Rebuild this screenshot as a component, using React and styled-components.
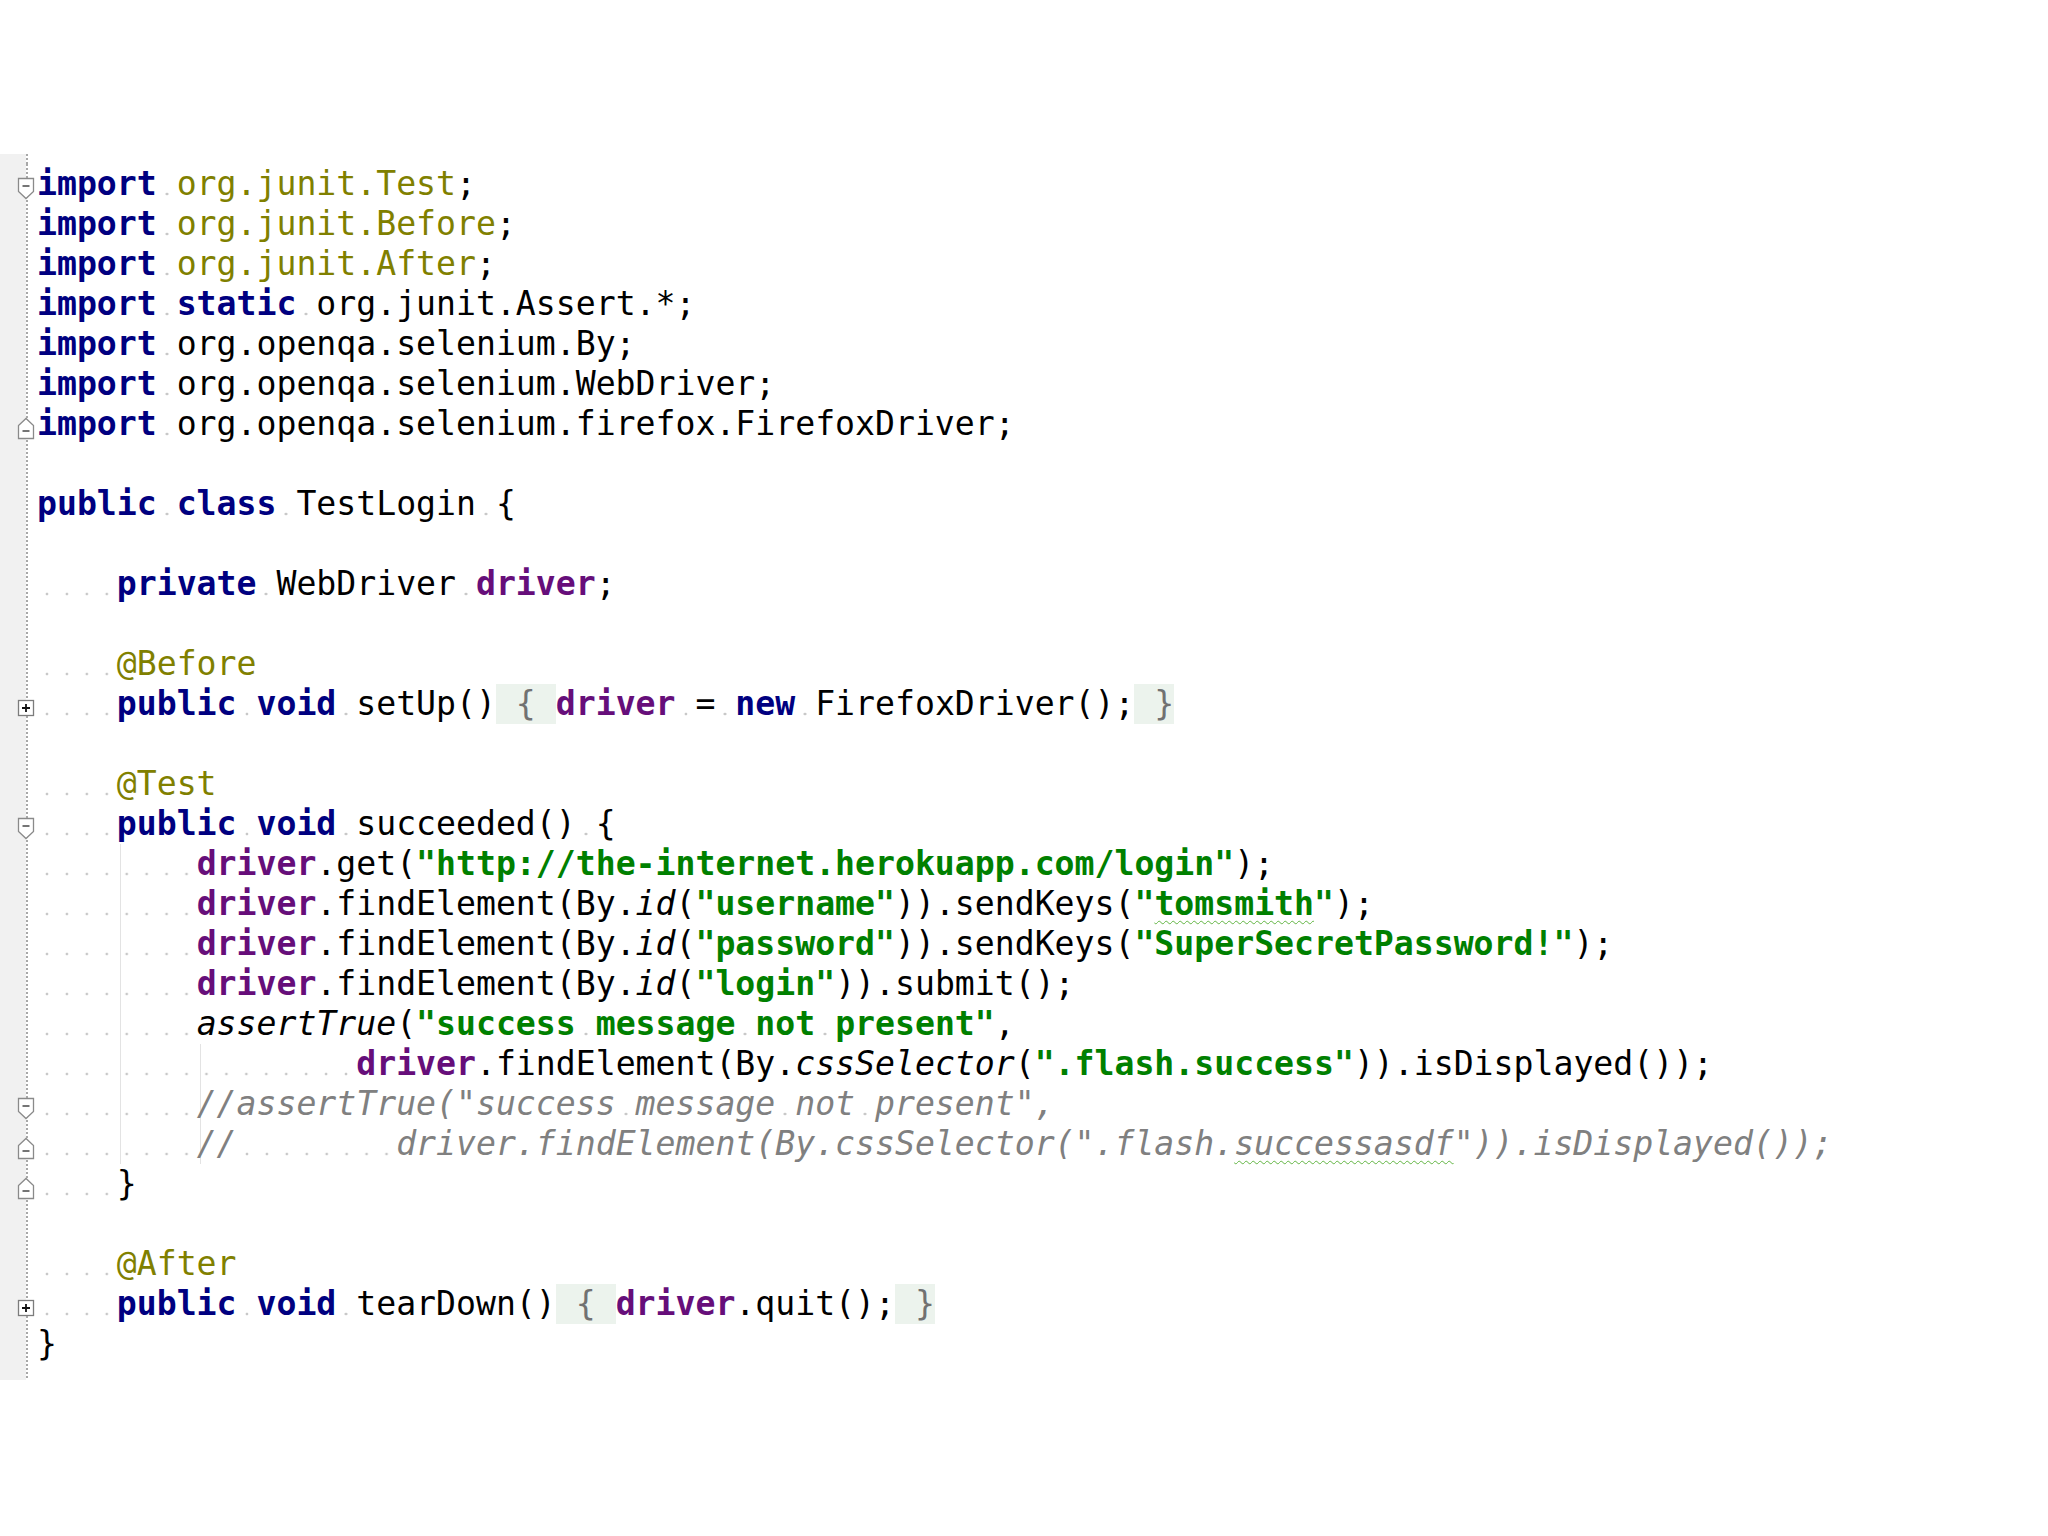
import React from 'react';
import styled, { createGlobalStyle, css } from 'styled-components';

const Global = createGlobalStyle`
  html, body { margin: 0; padding: 0; background: #ffffff; }
  body { width: 2048px; height: 1536px; overflow: hidden; }
`;

const Page = styled.div`
  padding-top: 154px;
`;

const Editor = styled.div`
  display: flex;
  flex-direction: column;
`;

const Row = styled.div`
  display: flex;
  height: ${p => p.$h || 40}px;
`;

const Gutter = styled.div`
  flex: 0 0 37px;
  height: 100%;
  display: flex;
  align-items: center;
  background:
    linear-gradient(to bottom, #a8a8a8 50%, transparent 50%) 26px 0 / 2px 4px repeat-y,
    linear-gradient(#f1f1f1, #f1f1f1) 0 0 / 26px 100% no-repeat;
`;

const IconSlot = styled.span`
  display: flex;
  margin-left: 17px;
  margin-top: 8px;
`;

const Code = styled.div`
  flex: 1;
  white-space: pre;
  font-family: "DejaVu Sans Mono", "Liberation Mono", monospace;
  font-size: 33.15px;
  line-height: 40px;
  color: #000;
  ${p =>
    p.$guides &&
    p.$guides.length > 0 &&
    css`
      background: ${p.$guides
        .map(c => `linear-gradient(#e3e3e3, #e3e3e3) calc(${c}ch + 3px) 0 / 1px 100% no-repeat`)
        .join(', ')};
    `}
`;

const kinds = {
  k: css`color: #000080; font-weight: bold;`,
  p: css`color: #808000;`,
  a: css`color: #808000;`,
  f: css`color: #660e7a; font-weight: bold;`,
  s: css`color: #008000; font-weight: bold;`,
  i: css`font-style: italic;`,
  c: css`color: #808080; font-style: italic;`,
};

const Tok = styled.span`
  ${p => kinds[p.$k]}
  ${p =>
    p.$wavy &&
    css`
      text-decoration: underline wavy #62b543;
      text-decoration-thickness: 1px;
      text-underline-offset: 5px;
    `}
`;

const Ws = styled.span`
  background: radial-gradient(circle at 50% 50%, #c8c8c8 1.1px, transparent 1.7px) 0 27.6px / 1ch 4px repeat-x;
`;

const Folded = styled.span`
  display: inline-block;
  background: #ecf3ed;
  color: #717171;
`;

const FoldIcon = ({ type }) => {
  if (type === 'plus') {
    return (
      <svg width="18" height="18" viewBox="0 0 18 18">
        <rect x="1.5" y="1.5" width="15" height="15" fill="#fff" stroke="#7c7c7c" strokeWidth="1.3" />
        <path d="M5 9h8M9 5v8" stroke="#111" strokeWidth="1.8" />
      </svg>
    );
  }
  if (type === 'start') {
    return (
      <svg width="18" height="23" viewBox="0 0 18 23">
        <path d="M1.5 1.5h15v13l-7.5 7-7.5-7z" fill="#fff" stroke="#8a8a8a" strokeWidth="1.3" />
        <path d="M5.5 9h7" stroke="#666" strokeWidth="1.8" />
      </svg>
    );
  }
  return (
    <svg width="18" height="23" viewBox="0 0 18 23">
      <path d="M1.5 21.5h15v-13l-7.5-7-7.5 7z" fill="#fff" stroke="#8a8a8a" strokeWidth="1.3" />
      <path d="M5.5 14h7" stroke="#666" strokeWidth="1.8" />
    </svg>
  );
};

const lines = [
  { fold: 'start', t: [['k', 'import'], ' ', ['p', 'org.junit.Test'], ';'] },
  { t: [['k', 'import'], ' ', ['p', 'org.junit.Before'], ';'] },
  { t: [['k', 'import'], ' ', ['p', 'org.junit.After'], ';'] },
  { t: [['k', 'import'], ' ', ['k', 'static'], ' org.junit.Assert.*;'] },
  { t: [['k', 'import'], ' org.openqa.selenium.By;'] },
  { t: [['k', 'import'], ' org.openqa.selenium.WebDriver;'] },
  { fold: 'end', t: [['k', 'import'], ' org.openqa.selenium.firefox.FirefoxDriver;'] },
  { t: [] },
  { t: [['k', 'public'], ' ', ['k', 'class'], ' TestLogin {'] },
  { t: [] },
  { t: ['    ', ['k', 'private'], ' WebDriver ', ['f', 'driver'], ';'] },
  { t: [] },
  { t: ['    ', ['a', '@Before']] },
  {
    fold: 'plus',
    t: ['    ', ['k', 'public'], ' ', ['k', 'void'], ' setUp()', ['fold', ' { '], ['f', 'driver'], ' = ', ['k', 'new'], ' FirefoxDriver();', ['fold', ' }']],
  },
  { t: [] },
  { t: ['    ', ['a', '@Test']] },
  { fold: 'start', t: ['    ', ['k', 'public'], ' ', ['k', 'void'], ' succeeded() {'] },
  { g: [4], t: ['        ', ['f', 'driver'], '.get(', ['s', '"http://the-internet.herokuapp.com/login"'], ');'] },
  {
    g: [4],
    t: ['        ', ['f', 'driver'], '.findElement(By.', ['i', 'id'], '(', ['s', '"username"'], ')).sendKeys(', ['s', '"'], ['sw', 'tomsmith'], ['s', '"'], ');'],
  },
  {
    g: [4],
    t: ['        ', ['f', 'driver'], '.findElement(By.', ['i', 'id'], '(', ['s', '"password"'], ')).sendKeys(', ['s', '"SuperSecretPassword!"'], ');'],
  },
  { g: [4], t: ['        ', ['f', 'driver'], '.findElement(By.', ['i', 'id'], '(', ['s', '"login"'], ')).submit();'] },
  { g: [4], t: ['        ', ['i', 'assertTrue'], '(', ['s', '"success message not present"'], ','] },
  {
    g: [4, 8],
    t: ['                ', ['f', 'driver'], '.findElement(By.', ['i', 'cssSelector'], '(', ['s', '".flash.success"'], ')).isDisplayed());'],
  },
  { g: [4, 8], fold: 'start', t: ['        ', ['c', '//assertTrue("success message not present",']] },
  {
    g: [4, 8],
    fold: 'end',
    t: ['        ', ['c', '//        driver.findElement(By.cssSelector(".flash.'], ['cw', 'successasdf'], ['c', '")).isDisplayed());']],
  },
  { fold: 'end', t: ['    }'] },
  { t: [] },
  { t: ['    ', ['a', '@After']] },
  {
    fold: 'plus',
    t: ['    ', ['k', 'public'], ' ', ['k', 'void'], ' tearDown()', ['fold', ' { '], ['f', 'driver'], '.quit();', ['fold', ' }']],
  },
  { t: ['}'] },
];

const withDots = (text, key) =>
  text.split(/( +)/).map((part, i) =>
    part === '' ? null : /^ +$/.test(part) ? <Ws key={`${key}-${i}`}>{part}</Ws> : <React.Fragment key={`${key}-${i}`}>{part}</React.Fragment>
  );

const renderToken = (tok, i) => {
  if (typeof tok === 'string') return <React.Fragment key={i}>{withDots(tok, i)}</React.Fragment>;
  const [kind, text] = tok;
  if (kind === 'fold') return <Folded key={i}>{text}</Folded>;
  const wavy = kind === 'sw' || kind === 'cw';
  const base = kind === 'sw' ? 's' : kind === 'cw' ? 'c' : kind;
  return (
    <Tok key={i} $k={base} $wavy={wavy}>
      {withDots(text, i)}
    </Tok>
  );
};

export default function App() {
  return (
    <>
      <Global />
      <Page>
        <Editor>
          <Row $h={10}>
            <Gutter />
          </Row>
          {lines.map((line, idx) => (
            <Row key={idx}>
              <Gutter>
                {line.fold && (
                  <IconSlot>
                    <FoldIcon type={line.fold} />
                  </IconSlot>
                )}
              </Gutter>
              <Code $guides={line.g}>{line.t.map(renderToken)}</Code>
            </Row>
          ))}
          <Row $h={16}>
            <Gutter />
          </Row>
        </Editor>
      </Page>
    </>
  );
}
